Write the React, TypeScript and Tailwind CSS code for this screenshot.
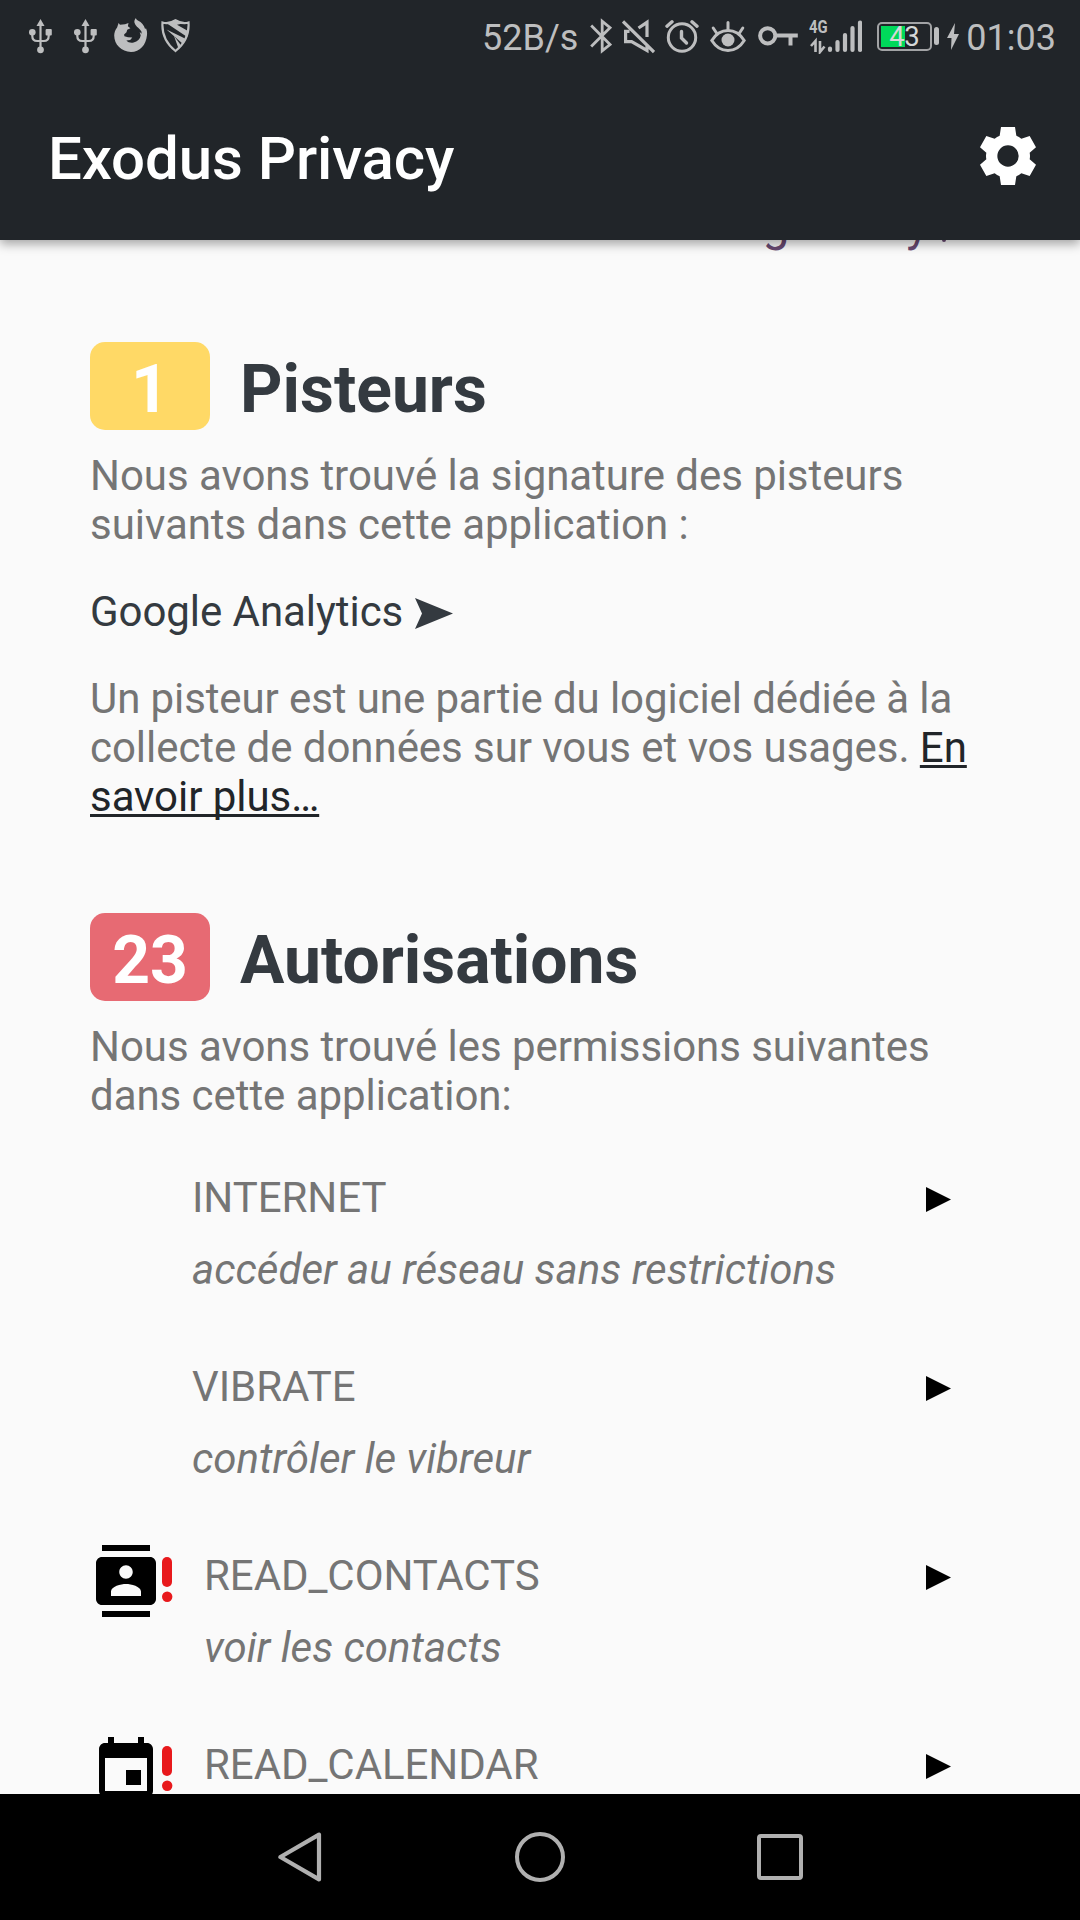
import React from 'react';
import { MdContacts, MdEvent } from 'react-icons/md';

const GREY = '#bdbebf';

function Usb({ className = '' }: { className?: string }) {
  return (
    <svg className={`h-9 w-[23px] shrink-0 ${className}`} viewBox="0 0 23 36" fill="none" stroke={GREY} strokeWidth="2.2">
      <path d="M11.5 6V32M3.3 13v5q0 5 5 5h6.4q5 0 5-5v-5" />
      <path d="M11.5 1l4 7h-8z" fill={GREY} stroke="none" />
      <circle cx="3.3" cy="14.3" r="3.3" fill={GREY} stroke="none" />
      <rect x="16.6" y="11" width="6.2" height="6.4" rx="1" fill={GREY} stroke="none" />
      <circle cx="11.5" cy="31.8" r="3.4" fill={GREY} stroke="none" />
    </svg>
  );
}

function Firefox() {
  return (
    <svg className="ml-[17px] h-9 w-[34px] shrink-0" viewBox="0 0 34 36" fill={GREY}>
      <path d="M4.600 5L6 6.800l5-.5L14.500 5l-.6 3.300 2.500 1.900-3.200 1.600-.7 2.400-2.400 2.300.3 1.700 3.600 1.100 4.300.2-2.100 2.500-3.800.5c1.700 2 4.500 2.700 7.200 2 4-.9 6.400-3.500 7.100-7l-1-3.400 2 1.600-.3-2.200c-1.200-2.600-4.600-4.400-6-6.700-1.800-2.700-1.100-5 .5-6.800.2 1.200.9 2 2 2.600 3.900 1.700 6 4.800 7.200 8.500l.9-.8c1 2.300 1.300 4.400 1 6.700C32 27.300 25.800 34 17 34 7.500 34 .2 26.700.2 17.600c0-3.200 1.100-6 2.900-8.200z" />
    </svg>
  );
}

function Shield() {
  return (
    <svg className="ml-[13px] h-9 w-[29px] shrink-0" viewBox="0 0 29 36">
      <path d="M1.500 4.500q6 2 13-2.300 7 4.300 13 2.300c.8 11-3.500 21-13 28.500C5 25.500.7 15.500 1.500 4.500z" fill="none" stroke={GREY} strokeWidth="2.200" />
      <path d="M6 5.500l8.500-3.500 8 3.200-6.500 1.500L27 13l-.8 6zM5.500 11.500L25 21l-3 5zM13 18l7.500 10-3 2.500z" fill={GREY} />
    </svg>
  );
}

function Bluetooth() {
  return (
    <svg className="ml-[12px] h-9 w-[22px] shrink-0" viewBox="0 0 22 36" fill="none" stroke={GREY} strokeWidth="2.800">
      <path d="M1.200 7.500L20 26.500l-7.800 6.300V3.200l7.800 6.500L1.200 28.500" />
    </svg>
  );
}

function Mute() {
  return (
    <svg className="ml-[10px] h-9 w-[33px] shrink-0" viewBox="0 0 33 36" fill="none" stroke={GREY} strokeWidth="3.200">
      <path d="M1 3.500L32 34M7.500 13.300H3.600v10.400h6L25 32.500V27M16.500 10L25 4.300V19" />
    </svg>
  );
}

function Alarm() {
  return (
    <svg className="ml-[10px] h-9 w-[34px] shrink-0" viewBox="0 0 34 36" fill="none" stroke={GREY} strokeWidth="3" strokeLinecap="round">
      <circle cx="17" cy="19.500" r="13.700" />
      <path d="M16.500 13.500v6.500l5 5" strokeWidth="3.400" />
      <path d="M2 8.200L7 3.800M32 8.200l-5-4.400" strokeWidth="3.400" />
    </svg>
  );
}

function Eye() {
  return (
    <svg className="ml-[11px] h-9 w-9 shrink-0" viewBox="0 0 36 36" fill="none" stroke={GREY} strokeWidth="3" strokeLinecap="round">
      <path d="M1.800 22.500Q8 12.500 18 12.500t16.200 10Q28 32.500 18 32.500T1.800 22.500z" />
      <path d="M18 4.500v7M3.200 10l4 6M32.800 10l-4 6" />
      <circle cx="18" cy="22" r="6.500" fill={GREY} stroke="none" />
    </svg>
  );
}

function Key() {
  return (
    <svg className="ml-[12px] h-9 w-[40px] shrink-0" viewBox="0 0 40 36" fill="none" stroke={GREY} strokeWidth="4">
      <circle cx="9.700" cy="17.800" r="7.600" />
      <path d="M17 17.500h22.800M32.500 17.500v10" />
    </svg>
  );
}

function Signal() {
  return (
    <div className="ml-[11px] flex h-9 w-[53px] shrink-0 flex-col">
      <span className="h-[17px] w-5 origin-left scale-x-[.78] text-[19px] leading-[17px] font-bold tracking-normal">4G</span>
      <svg className="-mt-[17px] h-9 w-[53px]" viewBox="0 0 53 36" stroke={GREY} strokeLinecap="round" fill="none">
        <path d="M21 30.500v1.500M28.500 24v8M36 17v15M43.500 10v22M51 4.500v27.500" strokeWidth="4.200" />
        <path d="M6.500 34V23L2 28M11 23v11l4.500-5.500" strokeWidth="2.600" strokeLinecap="butt" />
      </svg>
    </div>
  );
}

function Battery() {
  return (
    <div className="ml-[15px] flex shrink-0 items-center gap-[2px]">
      <div className="relative h-[29px] w-[55px] rounded-[5px] border-2 border-[#a2a3a5] p-[2px]">
        <div className="h-[21px] w-6 bg-[#00d95a]" />
        <span className="absolute top-[-1px] left-[10px] text-[27.5px] leading-[27px] tracking-[-0.5px] text-[#d5d8d8]">43</span>
      </div>
      <div className="h-[18px] w-[5px] rounded-sm bg-[#bdbebf]" />
      <svg className="ml-[6px] h-[27px] w-[12px]" viewBox="0 0 12 27" fill={GREY}>
        <path d="M8 0L0 15h4.500L4 27l8-16H7z" />
      </svg>
    </div>
  );
}

function Gear() {
  return (
    <svg className="mr-2 h-[58px] w-[56px]" viewBox="-84 -87 168 174" fill="#fff" fillRule="evenodd">
      <path d="M-21-87H21L25-61Q33-58 40-52L65-60 84-26 65-10Q67 0 65 10L84 26 65 60 40 52Q33 58 25 61L21 87H-21L-25 61Q-33 58-40 52L-65 60-84 26-65 10Q-67 0-65-10L-84-26-65-60-40-52Q-33-58-25-61zM0-32A32 32 0 1 0 0 32 32 32 0 1 0 0-32z" />
    </svg>
  );
}

function Section({ count, title, badge }: { count: number; title: string; badge: string }) {
  return (
    <div className="flex h-[88px] gap-[30px] text-[66px] leading-[88px] font-bold">
      <div className={`w-[120px] rounded-[15px] pt-[4px] text-center text-white ${badge}`}>{count}</div>
      <h2 className="pt-[4px] text-[#343a40]">{title}</h2>
    </div>
  );
}

function Permission({ name, text, icon }: { name: string; text: string; icon?: React.ReactNode }) {
  return (
    <div className="flex h-[189px] items-start">
      {icon ? (
        <div className="flex w-[114px] items-start">
          {icon}
          <svg className="mt-3 h-[46px] w-[11px]" viewBox="0 0 11 46" fill="#e8191c">
            <rect x="0" y="0" width="10" height="30" rx="5" />
            <circle cx="5.200" cy="39.800" r="5.200" />
          </svg>
        </div>
      ) : (
        <div className="w-[102px]" />
      )}
      <div className="flex flex-1 flex-col gap-[23px] pt-[6px]">
        <span className="tracking-[-0.06px]">{name}</span>
        <span className="italic">{text}</span>
      </div>
      <svg className="mt-[20px] mr-[39px] h-[25px] w-[25px]" viewBox="0 0 25 25" fill="#000">
        <path d="M0 0L25 12.500 0 25z" />
      </svg>
    </div>
  );
}

export default function App() {
  return (
    <div className="flex h-[1920px] w-[1080px] flex-col overflow-hidden bg-[#fafafa] font-['Roboto',sans-serif]">
      <header className="relative z-10 h-[240px] shrink-0 bg-[#212529] shadow-[0_4px_10px_rgba(0,0,0,0.35)]">
        <div className="flex h-[72px] items-center pr-[24px] pl-[29px] text-[36px] text-[#bdbebf]">
          <Usb />
          <Usb className="ml-[22px]" />
          <Firefox />
          <Shield />
          <span className="ml-auto pt-[3px] leading-none">52B/s</span>
          <Bluetooth />
          <Mute />
          <Alarm />
          <Eye />
          <Key />
          <Signal />
          <Battery />
          <span className="ml-[7px] pt-[3px] leading-none">01:03</span>
        </div>
        <div className="flex h-[168px] items-center justify-between pr-9 pl-12">
          <h1 className="pt-[5px] text-[60px] leading-none font-medium tracking-[-0.08px] text-white">Exodus Privacy</h1>
          <Gear />
        </div>
      </header>

      <main className="-mt-[45px] h-[1599px] shrink-0 overflow-hidden px-[90px] text-[42px] leading-[49px] text-[#757575]">
        <div className="flex h-[56px] items-end justify-end pr-[44px] text-[48px] leading-[54px] text-[#684971]">
          <p className="mr-[13px]">Google Play</p>
          <span className="mb-[9px] h-[3px] w-[4px] rounded-b-full bg-[#684971]" />
        </div>
        <div className="mt-[91px]">
          <Section count={1} title="Pisteurs" badge="bg-[#ffd966]" />
        </div>
        <p className="mt-[21px] tracking-[-0.05px]">
          Nous avons trouvé la signature des pisteurs
          <br />
          suivants dans cette application :
        </p>
        <div className="mt-[38px] flex items-center tracking-[-0.06px] text-[#343a40]">
          Google Analytics
          <svg className="mt-[4px] ml-[12px] h-[31px] w-[38px]" viewBox="0 0 38 31" fill="#343a40">
            <path d="M0 0L38 15.500 0 31 7 15.500z" />
          </svg>
        </div>
        <p className="mt-[38px] tracking-[-0.05px]">
          <span className="tracking-[-0.1px]">Un pisteur est une partie du logiciel dédiée à la</span>
          <br />
          collecte de données sur vous et vos usages.{' '}
          <span className="text-[#212529] underline decoration-[3px] underline-offset-[3px] [text-decoration-skip-ink:none]">
            En
            <br />
            savoir plus…
          </span>
        </p>
        <div className="mt-[92px]">
          <Section count={23} title="Autorisations" badge="bg-[#e76a73]" />
        </div>
        <p className="mt-[21px] tracking-[-0.05px]">
          Nous avons trouvé les permissions suivantes
          <br />
          dans cette application:
        </p>
        <div className="mt-[47px]">
          <Permission name="INTERNET" text="accéder au réseau sans restrictions" />
          <Permission name="VIBRATE" text="contrôler le vibreur" />
          <Permission name="READ_CONTACTS" text="voir les contacts" icon={<MdContacts className="size-[72px] shrink-0 text-black" />} />
          <Permission name="READ_CALENDAR" text="" icon={<MdEvent className="size-[72px] shrink-0 text-black" />} />
        </div>
      </main>

      <nav className="flex h-[126px] shrink-0 items-center justify-between bg-black pr-[277px] pl-[277px]">
        <svg className="h-[50px] w-[45px]" viewBox="0 0 45 50" fill="none" stroke="#b0b0b0" strokeWidth="4.200" strokeLinejoin="round">
          <path d="M42 2.600v44.800L3.400 25z" />
        </svg>
        <div className="size-[50px] rounded-full border-4 border-[#b0b0b0]" />
        <div className="size-[46px] rounded-[4px] border-4 border-[#b0b0b0]" />
      </nav>
    </div>
  );
}
